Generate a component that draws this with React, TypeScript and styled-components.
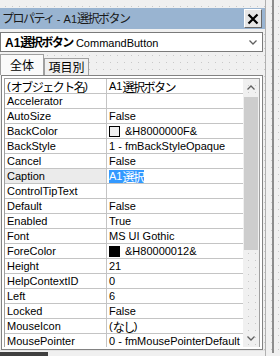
import React from 'react'
import styled, { createGlobalStyle } from 'styled-components'

const GlobalStyle = createGlobalStyle`
  html, body {
    margin: 0;
    padding: 0;
    width: 280px;
    height: 356px;
    overflow: hidden;
    background: #f0f0f0;
  }
  body {
    font-family: "Liberation Sans", "Noto Sans CJK JP", sans-serif;
    font-size: 11px;
    color: #000;
  }
`

type Row = { name: React.ReactNode; value: React.ReactNode; selected?: boolean }

// built at render time, the styled parts are declared further down
function buildRows(): Row[] {
  return [
    { name: <>(<Jp>オブジェクト名</Jp>)</>, value: <>A1<Jp>選択ボタン</Jp></> },
    { name: 'Accelerator', value: '' },
    { name: 'AutoSize', value: 'False' },
    { name: 'BackColor', value: <><Swatch $color="#f0f0f0" />&amp;H8000000F&amp;</> },
    { name: 'BackStyle', value: '1 - fmBackStyleOpaque' },
    { name: 'Cancel', value: 'False' },
    { name: 'Caption', value: <Selection>A1<Jp>選択</Jp></Selection>, selected: true },
    { name: 'ControlTipText', value: '' },
    { name: 'Default', value: 'False' },
    { name: 'Enabled', value: 'True' },
    { name: 'Font', value: 'MS UI Gothic' },
    { name: 'ForeColor', value: <><Swatch $color="#000" />&amp;H80000012&amp;</> },
    { name: 'Height', value: '21' },
    { name: 'HelpContextID', value: '0' },
    { name: 'Left', value: '6' },
    { name: 'Locked', value: 'False' },
    { name: 'MouseIcon', value: <>(<Jp>なし</Jp>)</> },
    { name: 'MousePointer', value: '0 - fmMousePointerDefault' },
  ]
}

function Chevron({ up }: { up?: boolean }) {
  return (
    <svg width="8" height="5" viewBox="0 0 8 5">
      <polyline
        points={up ? '0.5,4.5 4,1 7.5,4.5' : '0.5,0.5 4,4 7.5,0.5'}
        fill="none"
        stroke="#606060"
        strokeWidth="1.3"
      />
    </svg>
  )
}

export default function App() {
  const rows = buildRows()
  return (
    <>
      <GlobalStyle />
      <Page>
        <Panel>
          <TopStrip />
          <TitleBar>
            <TitleText>
              <Jp>プロパティ</Jp> - A1<Jp>選択ボタン</Jp>
            </TitleText>
            <CloseButton>
              <svg width="12" height="12" viewBox="0 0 12 12">
                <path d="M1.5 1.5 L10.5 10.5 M10.5 1.5 L1.5 10.5" stroke="#000" strokeWidth="2.2" />
              </svg>
            </CloseButton>
          </TitleBar>
          <Combo>
            <ComboText>
              <Bold>
                A1<Jp>選択ボタン</Jp>
              </Bold>
              &nbsp;CommandButton
            </ComboText>
            <Chevron />
          </Combo>
          <Tabs>
            <Tab $active>
              <TabLabel>全体</TabLabel>
            </Tab>
            <Tab>
              <TabLabel>項目別</TabLabel>
            </Tab>
          </Tabs>
          <GridFrame>
            <GridInner>
              <Table>
                {rows.map((r, i) => (
                  <GridRow key={i}>
                    <NameCell $selected={r.selected}>{r.name}</NameCell>
                    <ValueCell>{r.value}</ValueCell>
                  </GridRow>
                ))}
              </Table>
              <ScrollBar>
                <ArrowBox>
                  <Chevron up />
                </ArrowBox>
                <Track>
                  <Thumb />
                </Track>
                <ArrowBox>
                  <Chevron />
                </ArrowBox>
              </ScrollBar>
            </GridInner>
          </GridFrame>
          <Footer>
            <FooterBlock />
          </Footer>
        </Panel>
        <Side>
          <SideLine />
        </Side>
      </Page>
    </>
  )
}

const dots = `
  background-color: #f0f0f0;
  background-image: radial-gradient(circle, #c9c9c9 0.6px, transparent 0.9px);
  background-size: 7px 7px;
  background-position: 2px 3px;
`

const Page = styled.div`
  display: flex;
  width: 280px;
  height: 356px;
  ${dots}
`

const Panel = styled.div`
  display: flex;
  flex-direction: column;
  width: 265px;
  border-right: 1px solid #b0b0b0;
`

const TopStrip = styled.div`
  height: 8px;
  flex: none;
`

const TitleBar = styled.div`
  display: flex;
  align-items: center;
  justify-content: space-between;
  height: 21px;
  flex: none;
  background: #99b4d1;
  padding-left: 2px;
  padding-right: 3px;
`

const TitleText = styled.div`
  font-size: 11px;
  color: #1a1a1a;
  white-space: nowrap;
  line-height: 1;
`

const Jp = styled.span`
  font-family: "Noto Sans CJK JP", sans-serif;
  font-size: 12px;
  letter-spacing: -1.5px;
`

const CloseButton = styled.div`
  display: flex;
  align-items: center;
  justify-content: center;
  width: 16px;
  height: 17px;
  background: #e6e6e6;
  border: 1px solid;
  border-color: #fff #696969 #696969 #fff;
`

const Combo = styled.div`
  display: flex;
  align-items: center;
  justify-content: space-between;
  height: 18px;
  margin-top: 3px;
  margin-right: 2px;
  background: #fff;
  border: 1px solid #7a7a7a;
  padding: 0 5px 0 4px;
  flex: none;
`

const ComboText = styled.div`
  font-size: 11px;
  white-space: nowrap;
  line-height: 1;
`

const Bold = styled.span`
  font-weight: bold;
  font-size: 12px;
`

const Tabs = styled.div`
  display: flex;
  align-items: flex-end;
  height: 21px;
  margin-top: 2px;
  flex: none;
`

const Tab = styled.div<{ $active?: boolean }>`
  display: flex;
  align-items: center;
  justify-content: center;
  height: ${(p) => (p.$active ? '21px' : '17px')};
  width: ${(p) => (p.$active ? '44px' : '45px')};
  background: ${(p) => (p.$active ? '#fafafa' : '#f0f0f0')};
  border: 1px solid #a0a0a0;
  border-bottom: none;
  box-sizing: border-box;
`

const TabLabel = styled.span`
  font-family: "Noto Sans CJK JP", sans-serif;
  font-size: 12px;
  line-height: 1;
`

const GridFrame = styled.div`
  height: 275px;
  margin-left: 1px;
  margin-right: 2px;
  border: 1px solid #828282;
  padding: 2px;
  box-sizing: border-box;
  background: #fff;
  flex: none;
  overflow: hidden;
`

const GridInner = styled.div`
  display: flex;
  height: 100%;
  border: 1px solid #a0a0a0;
  border-bottom: none;
  box-sizing: border-box;
  overflow: hidden;
`

const Table = styled.div`
  flex: 1;
  display: flex;
  flex-direction: column;
  background: #fff;
`

const GridRow = styled.div`
  display: flex;
  height: 15px;
  flex: none;
  border-bottom: 1px solid #c4c4c4;
  box-sizing: border-box;
`

const NameCell = styled.div<{ $selected?: boolean }>`
  display: flex;
  align-items: center;
  width: 102px;
  flex: none;
  padding-left: 2px;
  border-right: 1px solid #c4c4c4;
  box-sizing: border-box;
  white-space: nowrap;
  overflow: hidden;
  background: ${(p) => (p.$selected ? '#ebebeb' : '#fff')};
`

const ValueCell = styled.div`
  display: flex;
  align-items: center;
  flex: 1;
  min-width: 0;
  padding-left: 2px;
  white-space: nowrap;
  overflow: hidden;
`

const Selection = styled.span`
  display: inline-flex;
  align-items: center;
  height: 13px;
  background: #3399ff;
  color: #fff;
  padding-right: 1px;
`

const Swatch = styled.span<{ $color: string }>`
  display: inline-block;
  width: 9px;
  height: 9px;
  margin-right: 5px;
  background: ${(p) => p.$color};
  border: 1px solid #000;
`

const ScrollBar = styled.div`
  display: flex;
  flex-direction: column;
  width: 16px;
  flex: none;
  ${dots}
`

const ArrowBox = styled.div`
  display: flex;
  align-items: center;
  justify-content: center;
  height: 17px;
  flex: none;
`

const Track = styled.div`
  flex: 1;
  padding: 1px 1px 0;
`

const Thumb = styled.div`
  height: 153px;
  background: #cdcdcd;
`

const Footer = styled.div`
  flex: 1;
  display: flex;
  align-items: flex-end;
  border-top: 1px solid #e3e3e3;
`

const FooterBlock = styled.div`
  width: 48px;
  height: 4px;
  background: #404040;
`

const Side = styled.div`
  flex: 1;
  display: flex;
  padding-left: 6px;
`

const SideLine = styled.div`
  width: 2px;
  height: 353px;
  background: #8c8c8c;
`
